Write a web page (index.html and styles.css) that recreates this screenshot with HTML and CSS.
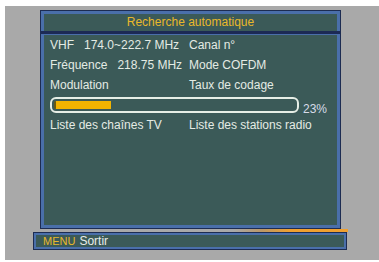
FILE: index.html
```html
<!DOCTYPE html>
<html>
<head>
<meta charset="utf-8">
<link rel="stylesheet" href="styles.css">
</head>
<body>
<div class="screen">
  <div class="panel">
    <div class="header">Recherche automatique</div>
    <div class="content">
      <div class="row">
        <div class="col"><span class="lbl">VHF</span><span>174.0~222.7 MHz</span></div>
        <div class="col">Canal n°</div>
      </div>
      <div class="row">
        <div class="col"><span class="lbl">Fréquence</span><span>218.75 MHz</span></div>
        <div class="col">Mode COFDM</div>
      </div>
      <div class="row">
        <div class="col">Modulation</div>
        <div class="col">Taux de codage</div>
      </div>
      <div class="row progress-row">
        <div class="bar"><div class="fill" style="width:23%"></div></div>
        <span class="pct">23%</span>
      </div>
      <div class="row">
        <div class="col">Liste des chaînes TV</div>
        <div class="col">Liste des stations radio</div>
      </div>
    </div>
  </div>
  <div class="glow"></div>
  <div class="footer"><span class="key">MENU</span><span>Sortir</span></div>
</div>
</body>
</html>
```
FILE: styles.css
```css
html, body {
  margin: 0;
  padding: 0;
  background: #ffffff;
}
body {
  padding: 6px 0 0 5px;
  width: 374px;
  font-family: "Liberation Sans", Arial, sans-serif;
}
.screen {
  background: #a9a9a9;
  height: 254px;
  padding-top: 4px;
  box-sizing: border-box;
}
.panel {
  margin-left: 35px;
  width: 301px;
  height: 219px;
  box-sizing: border-box;
  border: 1px solid #1d2c52;
  box-shadow: inset 0 0 0 3px #4a6faa;
  background: #3b5a58;
  display: flex;
  flex-direction: column;
}
.header {
  height: 23px;
  box-sizing: border-box;
  padding-top: 1px;
  border-bottom: 3px solid #1c2a55;
  display: flex;
  align-items: center;
  justify-content: center;
  color: #e9b82a;
  font-size: 12px;
}
.content {
  padding: 0 0 0 9px;
  border-top: 1px solid #4a6faa;
  color: #e4ebe4;
  font-size: 12px;
}
.row {
  height: 20px;
  display: flex;
  align-items: center;
}
.col {
  width: 139px;
  display: flex;
}
.lbl {
  margin-right: 10px;
}
.bar {
  width: 249px;
  height: 16px;
  box-sizing: border-box;
  border: 2px solid #e6eee6;
  border-radius: 6px;
  padding: 2px;
  display: flex;
}
.fill {
  height: 8px;
  background: #f2b400;
  border-left: 2px solid #6b5a10;
  border-radius: 2px 0 0 2px;
}
.pct {
  margin-left: 4px;
  margin-top: 8px;
  color: #d8dce8;
}
.glow {
  margin: 0 0 0 228px;
  width: 115px;
  height: 3px;
  background: linear-gradient(90deg, rgba(240,160,40,0) 0%, rgba(200,140,60,0.6) 25%, #f0a030 50%, #f0a030 100%);
}
.footer {
  margin-left: 28px;
  width: 314px;
  height: 18px;
  box-sizing: border-box;
  border: 1px solid #1d2c52;
  box-shadow: inset 0 0 0 2px #4a6faa;
  background: #3b5a58;
  display: flex;
  align-items: center;
  padding-left: 9px;
  font-size: 12px;
  color: #e8ece8;
}
.key {
  color: #e9b82a;
  font-size: 11px;
  margin-right: 4px;
}
```
